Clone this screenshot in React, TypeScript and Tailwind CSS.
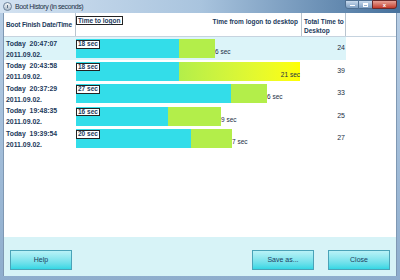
import React from "react";

const FONT = { fontFamily: '"Liberation Sans", Arial, sans-serif' };

type Row = {
  time: string;
  date: string;
  logon: number;
  desk: number;
  cw: number;
  gw: number;
  total: number;
  inside?: boolean;
  highlight?: boolean;
};

const rows: Row[] = [
  { time: "Today  20:47:07", date: "2011.09.02.", logon: 18, desk: 6, cw: 103, gw: 36, total: 24, highlight: true },
  { time: "Today  20:43:58", date: "2011.09.02.", logon: 18, desk: 21, cw: 103, gw: 121, total: 39, inside: true },
  { time: "Today  20:37:29", date: "2011.09.02.", logon: 27, desk: 6, cw: 155, gw: 36, total: 33 },
  { time: "Today  19:48:35", date: "2011.09.02.", logon: 16, desk: 9, cw: 92, gw: 53, total: 25 },
  { time: "Today  19:39:54", date: "2011.09.02.", logon: 20, desk: 7, cw: 115, gw: 41, total: 27 },
];

function Btn({ label }: { label: string }) {
  return (
    <div className="w-[62px] h-[20px] border border-[#4aa3b8] bg-gradient-to-b from-[#b8f2f7] to-[#30d7e4] flex items-center justify-center text-[7px] text-[#1d3c5e]">
      {label}
    </div>
  );
}

export default function App() {
  return (
    <div
      className="w-[400px] h-[280px] flex flex-col bg-gradient-to-b from-[#b9cfe6] to-[#8eadcd] overflow-hidden"
      style={FONT}
    >
      {/* Title bar */}
      <div className="h-[13px] flex items-start bg-gradient-to-r from-[#d3e2f1] via-[#a9c4de] to-[#46719c] relative">
        <div className="w-[9px] h-[9px] ml-[3px] mt-[2px] rounded-full border border-[#6a8099] bg-gradient-to-b from-[#f4f6f8] to-[#aebccb] flex items-center justify-center">
          <div className="w-[1px] h-[3px] bg-[#5a6f86]" />
        </div>
        <div className="ml-[3px] mt-[2px] text-[7px] leading-[9px] tracking-[-0.4px] text-[#1c2f45] whitespace-nowrap">
          Boot History (in seconds)
        </div>
        <div className="absolute right-[3px] top-0 flex h-[9px]">
          <div className="w-[14px] h-[9px] border border-[#4f6f91] rounded-bl-[3px] bg-gradient-to-b from-[#c9dbee] to-[#7e9fc2] flex items-end justify-center pb-[2px]">
            <div className="w-[5px] h-[1.5px] bg-white" />
          </div>
          <div className="w-[13px] h-[9px] border-y border-[#4f6f91] bg-gradient-to-b from-[#c9dbee] to-[#7e9fc2] flex items-center justify-center">
            <div className="w-[5px] h-[4px] border border-white border-t-2" />
          </div>
          <div className="w-[25px] h-[9px] border border-[#6a2a2a] rounded-br-[3px] bg-gradient-to-b from-[#e6a196] to-[#c1392b] flex items-center justify-center text-white text-[6px] font-bold leading-none">
            x
          </div>
        </div>
      </div>

      {/* Body */}
      <div className="flex-1 flex pl-[3px] pr-[3px] pb-[4px]">
        <div className="flex-1 flex flex-col border-l border-r border-[#7f98b3] bg-white">
          {/* Table */}
          <div className="flex-1 flex flex-col">
            {/* Header */}
            <div className="h-[24px] flex border-b border-[#c6d3df] text-[6.5px] font-bold text-[#1c3a5c]">
              <div className="w-[71px] flex items-center pl-[2px] pt-[1px] whitespace-nowrap tracking-[-0.12px]">
                Boot Finish Date/Time
              </div>
              <div className="w-[226px] border-l border-[#b9c4cf] relative">
                <div className="absolute left-[0px] top-[3px] h-[9px] px-[1px] border border-[#222] bg-white leading-[7px] whitespace-nowrap">
                  Time to logon
                </div>
                <div className="absolute right-[3px] top-[5px] leading-[8px] whitespace-nowrap">Time from logon to desktop</div>
              </div>
              <div className="w-[45px] border-l border-r border-[#b9c4cf] pl-[2px] pt-[4px] leading-[9px] whitespace-nowrap">
                Total Time to
                <br />
                Desktop
              </div>
            </div>
            {/* Rows */}
            {rows.map((r, i) => (
              <div key={i} className="h-[22.5px] flex text-[6.5px] font-bold text-[#1c3a5c]">
                <div className={`w-[342px] flex ${r.highlight ? "bg-[#dcf4f9]" : ""}`}>
                  <div className="w-[71px] pl-[2px] pt-[0.5px] leading-[11px] whitespace-pre text-[6.9px]">
                    {r.time}
                    <br />
                    {r.date}
                  </div>
                  <div className="w-[226px] pl-[1px] pt-[2px]">
                    <div className="flex h-[19px] items-end">
                      <div className="relative h-[19px] bg-[#33dde9]" style={{ width: r.cw }}>
                        <div className="absolute left-0 top-[1px] h-[8.5px] px-[1px] border border-[#222] bg-white leading-[6.5px] font-bold whitespace-nowrap">
                          {r.logon} sec
                        </div>
                      </div>
                      {r.inside ? (
                        <div
                          className="relative h-[19px] bg-gradient-to-r from-[#b3ee4a] to-[#ffff00]"
                          style={{ width: r.gw }}
                        >
                          <div className="absolute right-0 bottom-[2px] leading-[8px] font-normal text-[#1c2f45] whitespace-nowrap">
                            {r.desk} sec
                          </div>
                        </div>
                      ) : (
                        <>
                          <div className="h-[19px] bg-[#b3ee4a]" style={{ width: r.gw }} />
                          <div className="mb-[2px] leading-[8px] font-normal text-[#1c2f45] whitespace-nowrap">
                            {r.desk} sec
                          </div>
                        </>
                      )}
                    </div>
                  </div>
                  <div className="w-[45px] flex items-center justify-end pr-[1px] font-normal text-[#1c2f45] text-[7px]">
                    {r.total}
                  </div>
                </div>
              </div>
            ))}
          </div>
          {/* Bottom panel */}
          <div className="h-[39px] bg-[#d7f3f7] flex items-start pt-[13px] px-[6px]">
            <Btn label="Help" />
            <div className="flex-1" />
            <Btn label="Save as..." />
            <div className="w-[14px]" />
            <Btn label="Close" />
          </div>
        </div>
      </div>
    </div>
  );
}
